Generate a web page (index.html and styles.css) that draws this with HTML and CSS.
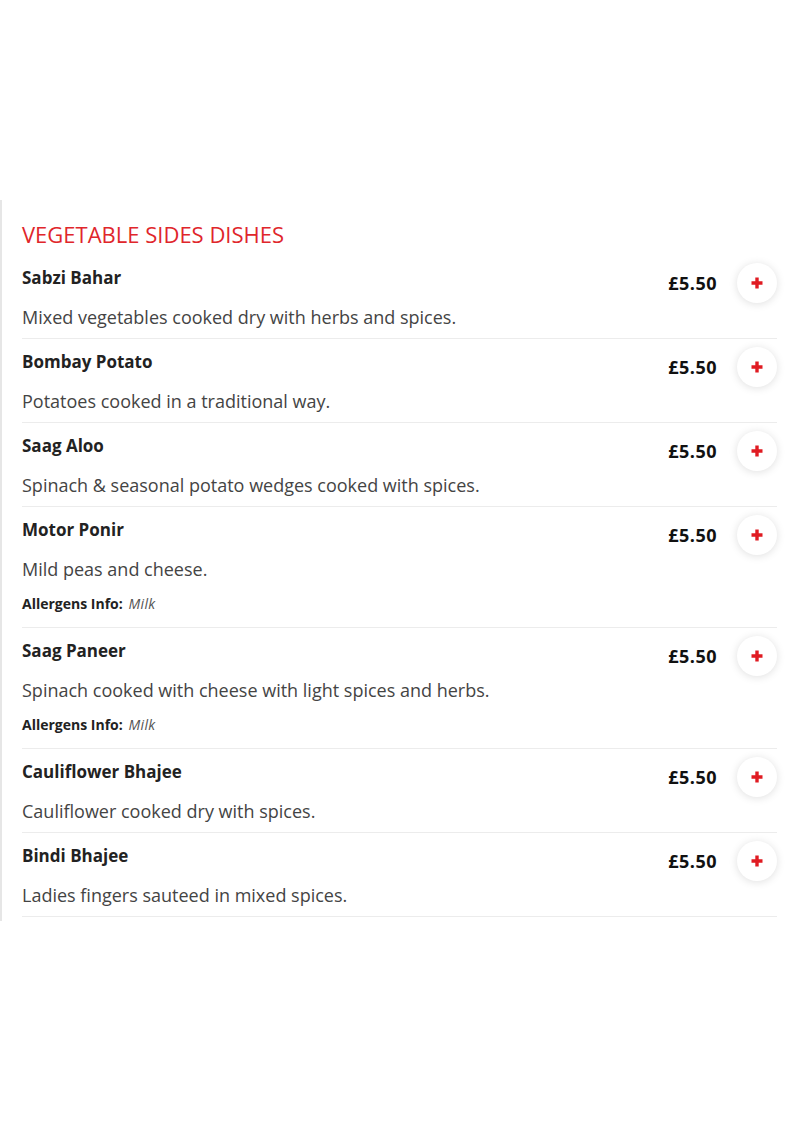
FILE: index.html
```html
<!DOCTYPE html>
<html lang="en">
<head>
<meta charset="utf-8">
<title>Vegetable Sides Dishes</title>
<link rel="stylesheet" href="styles.css">
</head>
<body>
<section class="menu">
  <h2 class="menu-title">VEGETABLE SIDES DISHES</h2>
  <ul class="items">
    <li class="item">
      <div class="item-top"><h3 class="item-name">Sabzi Bahar</h3><div class="item-buy"><span class="price">£5.50</span><button class="add" aria-label="Add"><svg viewBox="0 0 14 14" width="14" height="14"><path d="M7 1.5v11M1.5 7h11" stroke="#e01b22" stroke-width="3.4" fill="none"/></svg></button></div></div>
      <p class="item-desc">Mixed vegetables cooked dry with herbs and spices.</p>
    </li>
    <li class="item">
      <div class="item-top"><h3 class="item-name">Bombay Potato</h3><div class="item-buy"><span class="price">£5.50</span><button class="add" aria-label="Add"><svg viewBox="0 0 14 14" width="14" height="14"><path d="M7 1.5v11M1.5 7h11" stroke="#e01b22" stroke-width="3.4" fill="none"/></svg></button></div></div>
      <p class="item-desc">Potatoes cooked in a traditional way.</p>
    </li>
    <li class="item">
      <div class="item-top"><h3 class="item-name">Saag Aloo</h3><div class="item-buy"><span class="price">£5.50</span><button class="add" aria-label="Add"><svg viewBox="0 0 14 14" width="14" height="14"><path d="M7 1.5v11M1.5 7h11" stroke="#e01b22" stroke-width="3.4" fill="none"/></svg></button></div></div>
      <p class="item-desc">Spinach &amp; seasonal potato wedges cooked with spices.</p>
    </li>
    <li class="item">
      <div class="item-top"><h3 class="item-name">Motor Ponir</h3><div class="item-buy"><span class="price">£5.50</span><button class="add" aria-label="Add"><svg viewBox="0 0 14 14" width="14" height="14"><path d="M7 1.5v11M1.5 7h11" stroke="#e01b22" stroke-width="3.4" fill="none"/></svg></button></div></div>
      <p class="item-desc">Mild peas and cheese.</p>
      <p class="allergens"><b>Allergens Info:</b> <i>Milk</i></p>
    </li>
    <li class="item">
      <div class="item-top"><h3 class="item-name">Saag Paneer</h3><div class="item-buy"><span class="price">£5.50</span><button class="add" aria-label="Add"><svg viewBox="0 0 14 14" width="14" height="14"><path d="M7 1.5v11M1.5 7h11" stroke="#e01b22" stroke-width="3.4" fill="none"/></svg></button></div></div>
      <p class="item-desc">Spinach cooked with cheese with light spices and herbs.</p>
      <p class="allergens"><b>Allergens Info:</b> <i>Milk</i></p>
    </li>
    <li class="item">
      <div class="item-top"><h3 class="item-name">Cauliflower Bhajee</h3><div class="item-buy"><span class="price">£5.50</span><button class="add" aria-label="Add"><svg viewBox="0 0 14 14" width="14" height="14"><path d="M7 1.5v11M1.5 7h11" stroke="#e01b22" stroke-width="3.4" fill="none"/></svg></button></div></div>
      <p class="item-desc">Cauliflower cooked dry with spices.</p>
    </li>
    <li class="item">
      <div class="item-top"><h3 class="item-name">Bindi Bhajee</h3><div class="item-buy"><span class="price">£5.50</span><button class="add" aria-label="Add"><svg viewBox="0 0 14 14" width="14" height="14"><path d="M7 1.5v11M1.5 7h11" stroke="#e01b22" stroke-width="3.4" fill="none"/></svg></button></div></div>
      <p class="item-desc">Ladies fingers sauteed in mixed spices.</p>
    </li>
  </ul>
</section>
</body>
</html>
```

FILE: styles.css
```css
html, body {
  margin: 0;
  padding: 0;
  background: #fff;
}
body {
  font-family: "Open Sans", Lato, sans-serif;
  color: #222;
  padding-top: 200px;
}
.menu {
  border-left: 2px solid #e6e6e6;
  padding: 20px 16px 4px 20px;
  width: 755px;
}
.menu-title {
  margin: 0 0 7px;
  font-size: 22px;
  line-height: 28px;
  font-weight: 400;
  color: #e0262b;
}
.items {
  list-style: none;
  margin: 0;
  padding: 0;
}
.item {
  padding: 11px 0 9px;
  border-bottom: 1px solid #ececec;
}
.item-top {
  display: flex;
  justify-content: space-between;
  align-items: flex-start;
}
.item-name {
  margin: 0;
  font-size: 17px;
  line-height: 24px;
  font-weight: 700;
  color: #222;
}
.item-buy {
  display: flex;
  align-items: center;
  gap: 20px;
  margin-top: -3px;
  margin-bottom: -13px;
}
.price {
  font-size: 18px;
  letter-spacing: 0.5px;
  font-weight: 700;
  color: #111;
}
.add {
  width: 40px;
  height: 40px;
  border: 0;
  border-radius: 50%;
  background: #fff;
  box-shadow: 0 1px 8px rgba(0, 0, 0, 0.13);
  display: flex;
  align-items: center;
  justify-content: center;
  padding: 0;
}
.item-desc {
  margin: 15px 0 0;
  font-size: 18px;
  line-height: 24px;
  color: #444;
}
.allergens {
  margin: 11px 0 2px;
  font-size: 14px;
  line-height: 24px;
  color: #222;
}
.allergens i {
  margin-left: 2px;
  letter-spacing: 0.4px;
  color: #555;
}
```
